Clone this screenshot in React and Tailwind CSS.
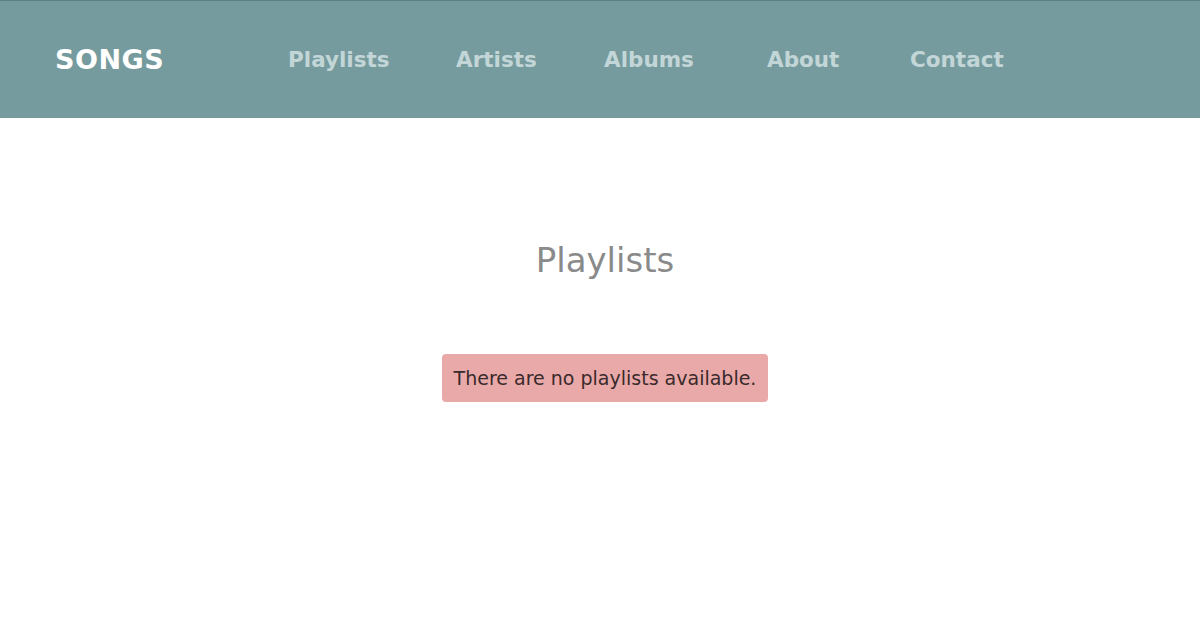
export default function App() {
  const links = [
    ["Playlists", "w-[168px]"],
    ["Artists", "w-[148px]"],
    ["Albums", "w-[163px]"],
    ["About", "w-[143px]"],
    ["Contact", ""],
  ];
  return (
    <div className="min-h-[624px] bg-white" style={{ fontFamily: '"DejaVu Sans", sans-serif' }}>
      <header className="h-[118px] bg-[#769b9e] border-t border-[#5c7f82] flex items-center pl-[55px] pt-[2px]">
        <div className="w-[233px] text-[27px] font-bold text-white tracking-[0.5px]">SONGS</div>
        <nav className="flex items-center">
          {links.map(([l, w]) => (
            <a key={l} className={`${w} text-[21.5px] font-semibold text-[#c3d6d7]`}>
              {l}
            </a>
          ))}
        </nav>
      </header>
      <main className="flex flex-col items-center pt-[117px] pl-[10px]">
        <h1 className="text-[34px] text-[#8a8a8a]">Playlists</h1>
        <div className="mt-[68px] bg-[#e9a9a9] text-[#3b2a2b] text-[19px] rounded-[4px] px-[12px] h-[48px] flex items-center">
          There are no playlists available.
        </div>
      </main>
    </div>
  );
}
